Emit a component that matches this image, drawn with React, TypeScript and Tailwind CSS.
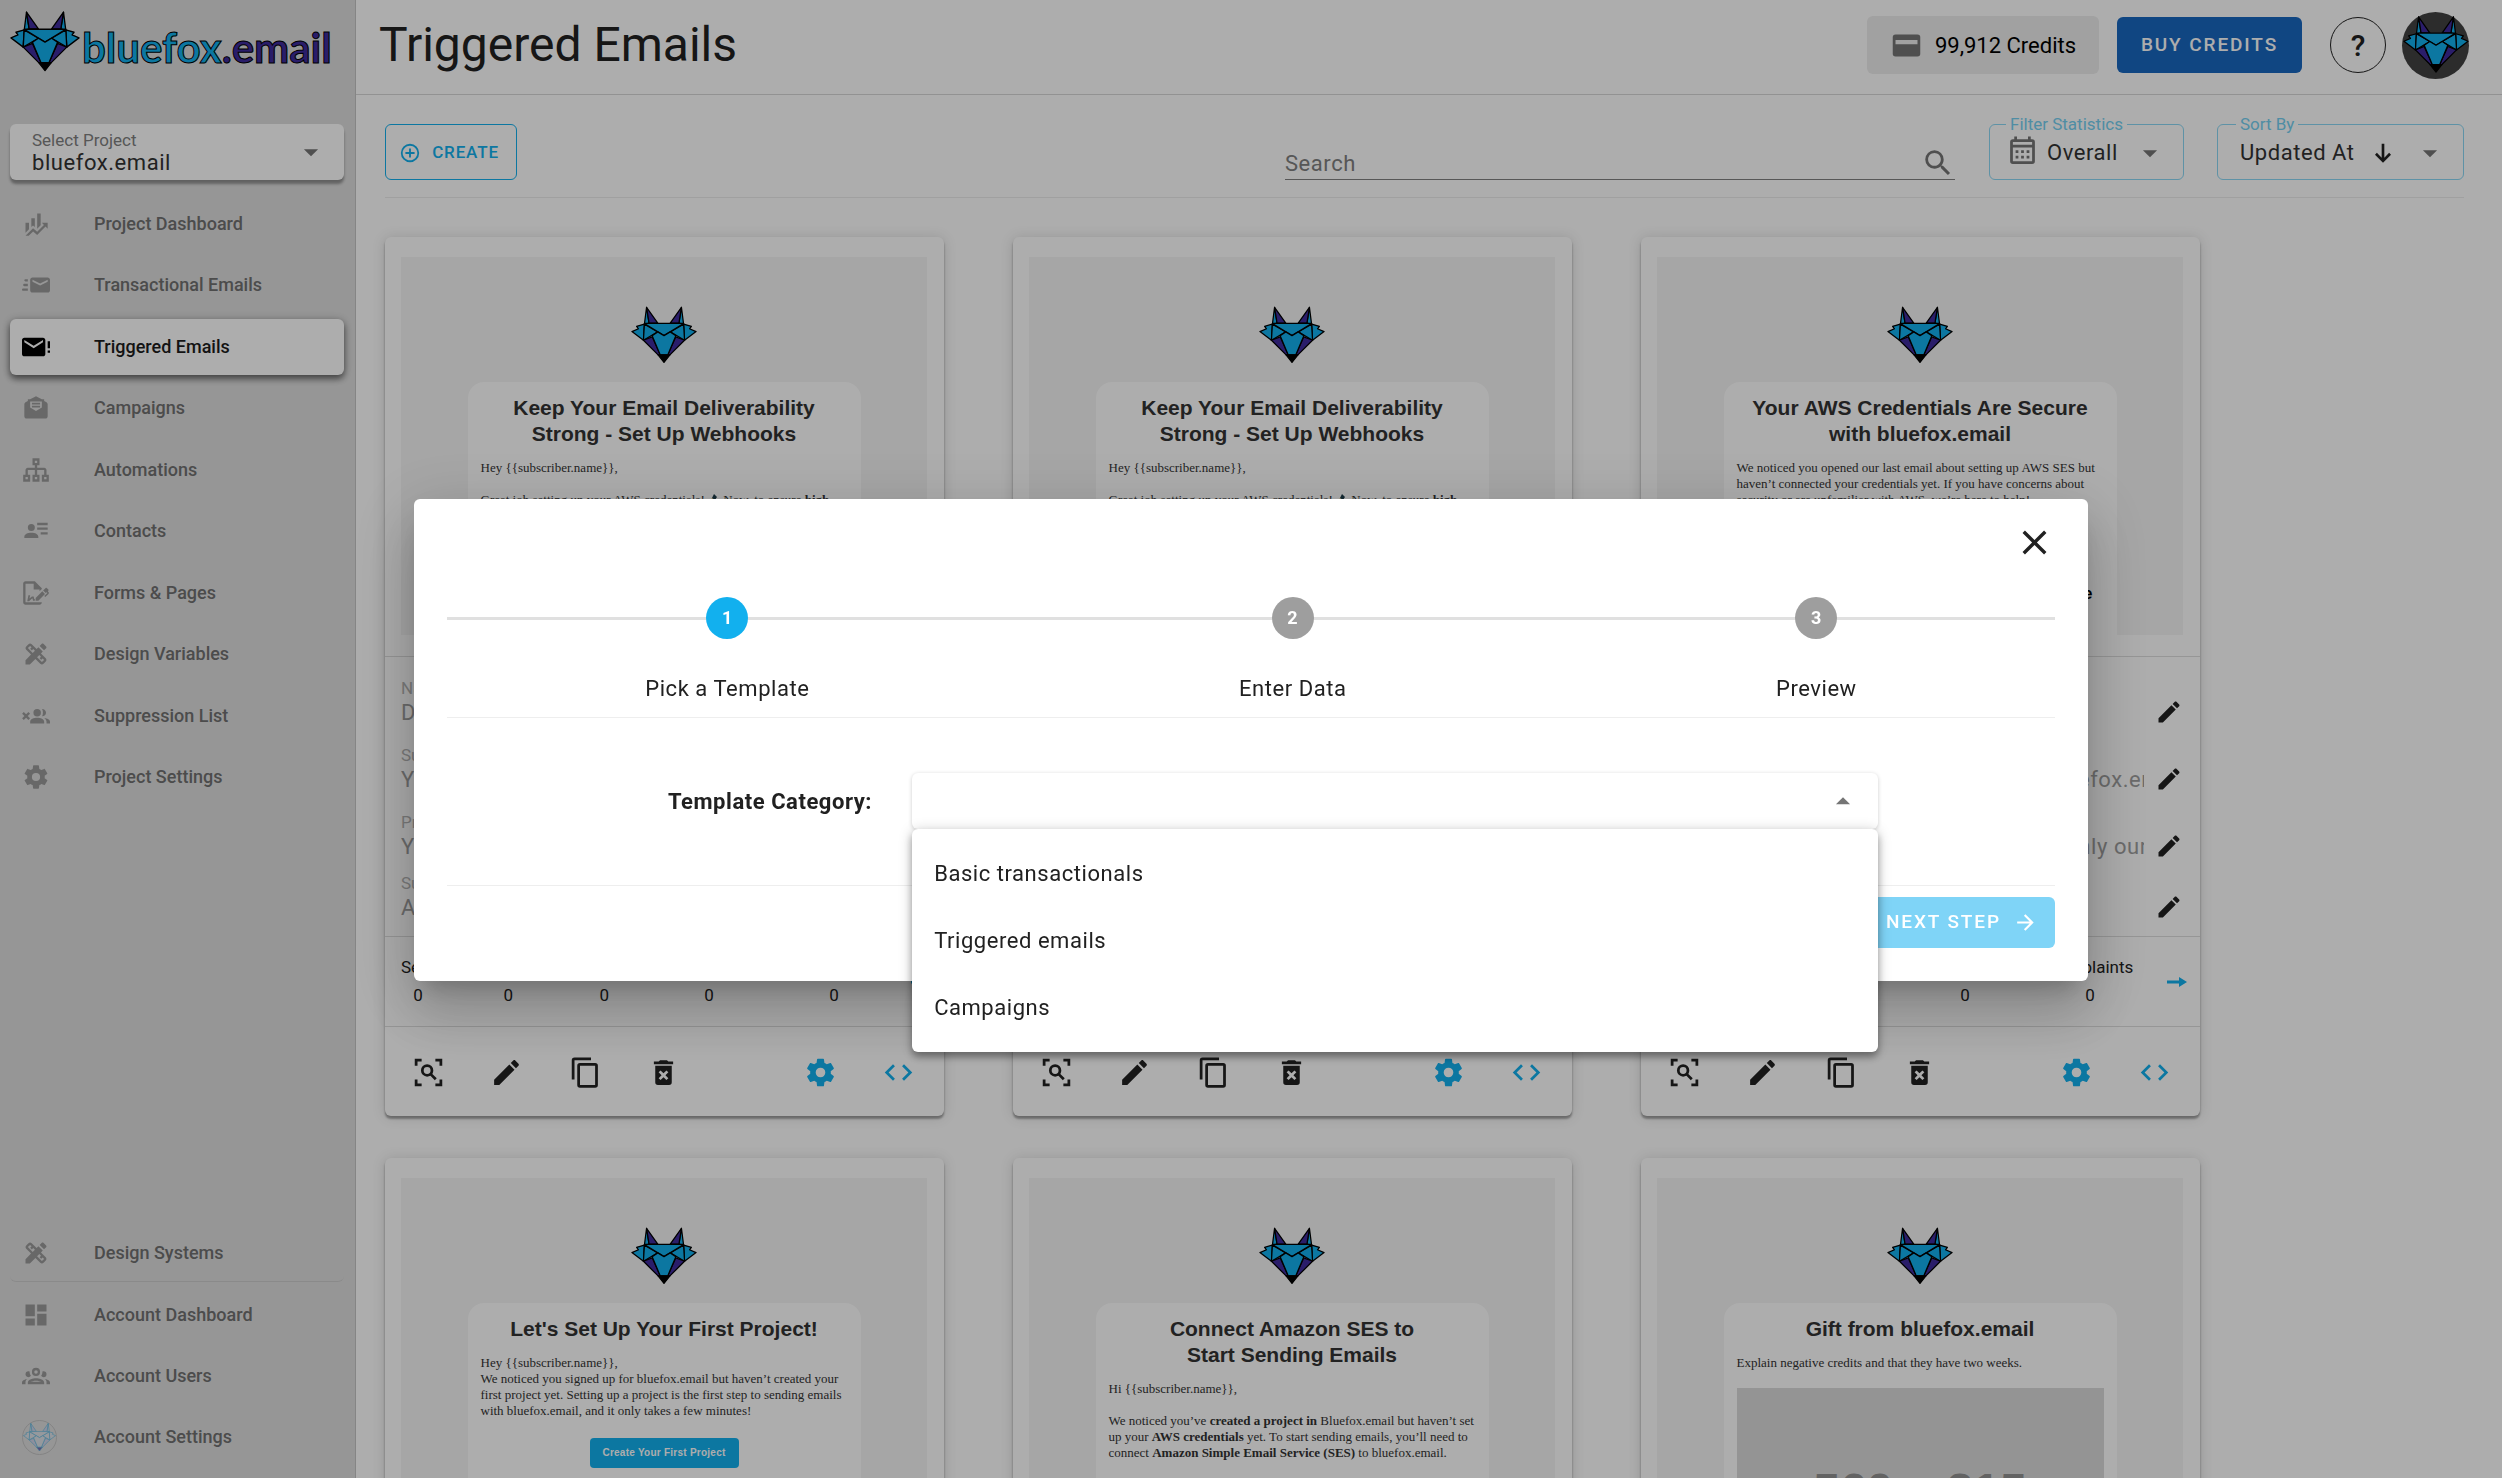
import type { ReactNode } from "react";
import { MdDashboard, MdDesignServices } from "react-icons/md";

type IconProps = { d: string; className?: string };

function Icon({ d, className = "size-7" }: IconProps) {
  return (
    <svg viewBox="0 0 24 24" fill="currentColor" aria-hidden="true" className={`shrink-0 ${className}`}>
      <path fillRule="evenodd" d={d} />
    </svg>
  );
}

const paths = {
  finance:
    "M6,16.5L3,19.44V11H6M11,14.66L9.43,13.32L8,14.64V7H11M16,13L13,16V3H16M18.81,12.81L17,11H22V16L20.21,14.21L13,21.36L9.53,18.34L5.75,22H3L9.47,15.66L13,18.64",
  emailFast:
    "M22,5.5H9C7.9,5.5 7,6.4 7,7.5V16.5C7,17.6 7.9,18.5 9,18.5H22C23.1,18.5 24,17.6 24,16.5V7.5C24,6.4 23.1,5.5 22,5.5M22,9.17L15.5,12.5L9,9.17V7.5L15.5,10.81L22,7.5V9.17M5,16.5C5,16.67 5.03,16.83 5.05,17H1C0.45,17 0,16.55 0,16S0.45,15 1,15H5V16.5M3,7H5.05C5.03,7.17 5,7.33 5,7.5V9H3C2.45,9 2,8.55 2,8S2.45,7 3,7M1,12C1,11.45 1.45,11 2,11H5V13H2C1.45,13 1,12.55 1,12Z",
  emailAlert:
    "M24,7H22V13H24V7M24,15H22V17H24V15M20,6C20,4.9 19.1,4 18,4H2C0.9,4 0,4.9 0,6V18C0,19.1 0.9,20 2,20H18C19.1,20 20,19.1 20,18V6M18,8L10,13L2,8V6L10,11L18,6V8Z",
  newsletter:
    "M12,2L7,4.5H5V6L3,7C2.4,7.5 2,8 2,8.8V19C2,20.1 2.9,21 4,21H20C21.1,21 22,20.1 22,19V8.8C22,8 21.6,7.5 21,7L19,6V4.5H17L12,2M7,6.5H17V11.5L12,14.5L7,11.5V6.5M8.5,7.5V9H15.5V7.5H8.5M8.5,10V11.5H15.5V10H8.5Z",
  sitemap:
    "M9,2H15V8H13V10H19C20.1,10 21,10.9 21,12V16H23V22H17V16H19V12H13V16H15V22H9V16H11V12H5V16H7V22H1V16H3V12C3,10.9 3.9,10 5,10H11V8H9V2M11,4V6H13V4H11M3,18V20H5V18H3M11,18V20H13V18H11M19,18V20H21V18H19Z",
  contacts:
    "M8,6A3,3 0 0,1 11,9A3,3 0 0,1 8,12A3,3 0 0,1 5,9A3,3 0 0,1 8,6M2,18V17C2,14.8 4.7,13.5 8,13.5C11.3,13.5 14,14.8 14,17V18H2M13,5H22V7H13V5M13,9H22V11H13V9M16,13H22V15H16V13Z",
  sign:
    "M19.7,12.9L14,18.6H11.7V16.3L17.4,10.6L19.7,12.9M23.1,12.1C23.1,12.4 22.8,12.7 22.5,13L20,15.5L19.1,14.6L21.7,12L21.1,11.4L20.4,12.1L18.1,9.8L20.3,7.7C20.5,7.5 20.9,7.5 21.2,7.7L22.6,9.1C22.8,9.3 22.8,9.7 22.6,10C22.4,10.2 22.2,10.4 22.2,10.6C22.2,10.8 22.4,11 22.6,11.2C22.9,11.5 23.2,11.8 23.1,12.1M3,20V4H10V9H15V10.5L17,8.5V8L11,2H3C1.9,2 1,2.9 1,4V20C1,21.1 1.9,22 3,22H15C16.1,22 17,21.1 17,20H3M11,17.1C10.8,17.1 10.6,17.2 10.5,17.2L10,15H8.5L6.4,16.7L7,14H5.5L4.5,19H6L8.9,16.4L9.5,18.7H10.5L11,18.6V17.1Z",
  removeUsers:
    "M13,6A3.2,3.2 0 1,1 13,12.4A3.2,3.2 0 1,1 13,6M7,18.5V17C7,14.8 10,13.6 13,13.6C16,13.6 19,14.8 19,17V18.5H7M17.2,6C19,6 20.6,7.3 20.6,9.2C20.6,11 19,12.4 17.2,12.3C18.2,10.5 18.2,8 17.2,6M19,13.8C21.8,14.1 24,15.3 24,17V18.5H21V17C21,15.7 20.2,14.6 19,13.8M1.5,8.6L3.5,10.6L5.5,8.6L6.9,10L4.9,12L6.9,14L5.5,15.4L3.5,13.4L1.5,15.4L0.1,14L2.1,12L0.1,10L1.5,8.6Z",
  cog:
    "M12,15.5A3.5,3.5 0 0,1 8.5,12A3.5,3.5 0 0,1 12,8.5A3.5,3.5 0 0,1 15.5,12A3.5,3.5 0 0,1 12,15.5M19.43,12.97C19.47,12.65 19.5,12.33 19.5,12C19.5,11.67 19.47,11.34 19.43,11L21.54,9.37C21.73,9.22 21.78,8.95 21.66,8.73L19.66,5.27C19.54,5.05 19.27,4.96 19.05,5.05L16.56,6.05C16.04,5.66 15.5,5.32 14.87,5.07L14.5,2.42C14.46,2.18 14.25,2 14,2H10C9.75,2 9.54,2.18 9.5,2.42L9.13,5.07C8.5,5.32 7.96,5.66 7.44,6.05L4.95,5.05C4.73,4.96 4.46,5.05 4.34,5.27L2.34,8.73C2.21,8.95 2.27,9.22 2.46,9.37L4.57,11C4.53,11.34 4.5,11.67 4.5,12C4.5,12.33 4.53,12.65 4.57,12.97L2.46,14.63C2.27,14.78 2.21,15.05 2.34,15.27L4.34,18.73C4.46,18.95 4.73,19.03 4.95,18.95L7.44,17.94C7.96,18.34 8.5,18.68 9.13,18.93L9.5,21.58C9.54,21.82 9.75,22 10,22H14C14.25,22 14.46,21.82 14.5,21.58L14.87,18.93C15.5,18.67 16.04,18.34 16.56,17.94L19.05,18.95C19.27,19.03 19.54,18.95 19.66,18.73L21.66,15.27C21.78,15.05 21.73,14.78 21.54,14.63L19.43,12.97Z",
  users:
    "M12,5A3.5,3.5 0 1,0 12,12A3.5,3.5 0 1,0 12,5M12,7A1.5,1.5 0 1,1 12,10A1.5,1.5 0 1,1 12,7M5.5,8A2.5,2.5 0 0,0 3,10.5C3,11.44 3.53,12.25 4.29,12.68C4.65,12.88 5.06,13 5.5,13C5.94,13 6.35,12.88 6.71,12.68C7.08,12.47 7.39,12.17 7.62,11.81C6.89,10.86 6.5,9.7 6.5,8.5V8.22C6.2,8.08 5.86,8 5.5,8M18.5,8C18.14,8 17.8,8.08 17.5,8.22V8.5C17.5,9.7 17.11,10.86 16.38,11.81C16.9,12.6 17.7,13 18.5,13A2.5,2.5 0 0,0 18.5,8M12,14C9.66,14 5,15.17 5,17.5V19H19V17.5C19,15.17 14.34,14 12,14M12,16C13.8,16 15.8,16.6 16.6,17H7.4C8.2,16.6 10.2,16 12,16M4.71,14.55C2.78,14.78 0,15.76 0,17.5V19H3V17.07C3,16.06 3.69,15.22 4.71,14.55M19.29,14.55C20.31,15.22 21,16.06 21,17.07V19H24V17.5C24,15.76 21.22,14.78 19.29,14.55Z",
  menuDown: "M7,10L12,15L17,10H7Z",
  menuUp: "M7,15L12,10L17,15H7Z",
  plusCircle:
    "M12,20C7.59,20 4,16.41 4,12C4,7.59 7.59,4 12,4C16.41,4 20,7.59 20,12C20,16.41 16.41,20 12,20M12,2A10,10 0 0,0 2,12A10,10 0 0,0 12,22A10,10 0 0,0 22,12A10,10 0 0,0 12,2M13,7H11V11H7V13H11V17H13V13H17V11H13V7Z",
  magnify:
    "M9.5,3A6.5,6.5 0 0,1 16,9.5C16,11.11 15.41,12.59 14.44,13.73L14.71,14H15.5L20.5,19L19,20.5L14,15.5V14.71L13.73,14.44C12.59,15.41 11.11,16 9.5,16A6.5,6.5 0 0,1 3,9.5A6.5,6.5 0 0,1 9.5,3M9.5,5C7,5 5,7 5,9.5C5,12 7,14 9.5,14C12,14 14,12 14,9.5C14,7 12,5 9.5,5Z",
  calendar:
    "M7,11H9V13H7V11M7,15H9V17H7V15M11,11H13V13H11V11M11,15H13V17H11V15M15,11H17V13H15V11M15,15H17V17H15V15M5,3H6V1H8V3H16V1H18V3H19A2,2 0 0,1 21,5V19A2,2 0 0,1 19,21H5A2,2 0 0,1 3,19V5A2,2 0 0,1 5,3M5,9V19H19V9H5M5,5V7H19V5H5Z",
  card: "M4,4H20A2,2 0 0,1 22,6V18A2,2 0 0,1 20,20H4A2,2 0 0,1 2,18V6A2,2 0 0,1 4,4M4,8V11H20V8H4Z",
  arrowDown: "M11,5H13V15.5L16.6,11.9L18,13.3L12,19.3L6,13.3L7.4,11.9L11,15.5V5Z",
  arrowRight: "M4,11V13H16L10.5,18.5L11.92,19.92L19.84,12L11.92,4.08L10.5,5.5L16,11H4Z",
  arrowRightThick: "M14,16.5V13.5H2V10.5H14V7L22,12L14,17V16.5Z",
  close:
    "M19,6.41L17.59,5L12,10.59L6.41,5L5,6.41L10.59,12L5,17.59L6.41,19L12,13.41L17.59,19L19,17.59L13.41,12L19,6.41Z",
  scan:
    "M2,2H7V4H4V7H2V2M17,2H22V7H20V4H17V2M2,17H4V20H7V22H2V17M20,17H22V22H17V20H20V17M11,6A4.5,4.5 0 0,1 15.5,10.5C15.5,11.4 15.2,12.3 14.8,13L18,16.2L16.6,17.6L13.4,14.4C12.7,14.8 11.9,15 11,15A4.5,4.5 0 1,1 11,6M11,8A2.5,2.5 0 1,0 11,13A2.5,2.5 0 1,0 11,8Z",
  pencil:
    "M20.71,7.04C21.1,6.65 21.1,6 20.71,5.63L18.37,3.29C18,2.9 17.35,2.9 16.96,3.29L15.12,5.12L18.87,8.87M3,17.25V21H6.75L17.81,9.93L14.06,6.18L3,17.25Z",
  copy: "M19,21H8V7H19M19,5H8A2,2 0 0,0 6,7V21A2,2 0 0,0 8,23H19A2,2 0 0,0 21,21V7A2,2 0 0,0 19,5M16,1H4A2,2 0 0,0 2,3V17H4V3H16V1Z",
  remove:
    "M6,19A2,2 0 0,0 8,21H16A2,2 0 0,0 18,19V7H6V19M8.46,11.88L9.87,10.47L12,12.59L14.12,10.47L15.53,11.88L13.41,14L15.53,16.12L14.12,17.53L12,15.41L9.88,17.53L8.47,16.12L10.59,14L8.46,11.88M15.5,4L14.5,3H9.5L8.5,4H5V6H19V4H15.5Z",
  code: "M14.6,16.6L19.2,12L14.6,7.4L16,6L22,12L16,18L14.6,16.6M9.4,16.6L4.8,12L9.4,7.4L8,6L2,12L8,18L9.4,16.6Z",
};

function Fox({ className, outline = false }: { className?: string; outline?: boolean }) {
  const blue = outline ? "#dfe6f0" : "#12b0ee";
  const purple = outline ? "#c9cdf0" : "#3f2b9d";
  const line = outline ? "#12a0dd" : "#000";
  return (
    <svg
      viewBox="-3 -3 212 184"
      className={className}
      stroke={line}
      strokeWidth="4"
      strokeLinejoin="round"
      role="img"
      aria-label="Bluefox"
    >
      <path fill={blue} d="M47 0L40 55L55 51Z M159 0L166 55L151 51Z" />
      <path fill={purple} d="M47 0L55 51L83 51Z M159 0L151 51L123 51Z" />
      <path fill={blue} d="M40 54L15 61L21 69L0 78L37 106L40 54Z M166 54L191 61L185 69L206 78L169 106L166 54Z" />
      <path fill={blue} d="M40 54L37 106L83 79Z M166 54L169 106L123 79Z" />
      <path fill={blue} d="M40 52H166L103 91Z" />
      <path fill={purple} d="M37 106L65 95L91 153H84Z M169 106L141 95L115 153H122Z" />
      <path fill={blue} d="M65 91L83 79L103 91L123 79L141 91L115 153H91Z" />
      <path fill={outline ? "#3f2b9d" : "#000"} d="M84 153H122L103 177Z" />
    </svg>
  );
}

function NavItem({ icon, label, active = false }: { icon: ReactNode; label: string; active?: boolean }) {
  return (
    <a
      href="#"
      aria-current={active ? "page" : undefined}
      className={
        active
          ? "flex h-14 items-center rounded-md bg-white pl-3 text-lg font-medium text-[#1c1c1c] shadow-[0_4px_6px_rgba(0,0,0,0.45),0_1px_10px_rgba(0,0,0,0.25)]"
          : "flex h-14 items-center rounded-md pl-3 text-lg font-medium text-[#707070]"
      }
    >
      <span className={`flex w-18 items-center ${active ? "text-black" : "text-[#9a9a9a]"}`}>{icon}</span>
      {label}
    </a>
  );
}

function Sidebar() {
  return (
    <aside className="flex w-[356px] shrink-0 flex-col border-r border-[#c4c4c4] bg-[#dedede] pr-[11px] pb-[13px] pl-[10px]">
      <a href="#" className="flex h-[94px] items-center">
        <Fox className="-mt-3 h-[61px] w-[70px] shrink-0" />
        <span className="ml-[2px] font-['Lato',sans-serif] text-[42px] leading-none font-bold text-[#12b0ee] [-webkit-text-stroke:1px_#000]">
          bluefox<span className="text-[#3f2b9d]">.email</span>
        </span>
      </a>

      <div className="relative mt-[30px] h-14 rounded-md bg-white shadow-[0_4px_3px_rgba(0,0,0,0.35)]">
        <label htmlFor="project" className="pointer-events-none absolute top-1 left-[22px] text-[17px] leading-6 text-[#808080]">
          Select Project
        </label>
        <select
          id="project"
          className="size-full appearance-none rounded-md bg-transparent pt-5 pl-[22px] text-[22px] tracking-wide text-[#333]"
        >
          <option>bluefox.email</option>
        </select>
        <span className="pointer-events-none absolute top-[11px] right-4 text-[#757575]">
          <Icon d={paths.menuDown} className="size-[34px]" />
        </span>
      </div>

      <nav aria-label="Project" className="mt-4 flex h-[609px] flex-col justify-between">
        <NavItem icon={<Icon d={paths.finance} />} label="Project Dashboard" />
        <NavItem icon={<Icon d={paths.emailFast} />} label="Transactional Emails" />
        <NavItem icon={<Icon d={paths.emailAlert} />} label="Triggered Emails" active />
        <NavItem icon={<Icon d={paths.newsletter} />} label="Campaigns" />
        <NavItem icon={<Icon d={paths.sitemap} />} label="Automations" />
        <NavItem icon={<Icon d={paths.contacts} />} label="Contacts" />
        <NavItem icon={<Icon d={paths.sign} />} label="Forms & Pages" />
        <NavItem icon={<MdDesignServices className="size-7" />} label="Design Variables" />
        <NavItem icon={<Icon d={paths.removeUsers} />} label="Suppression List" />
        <NavItem icon={<Icon d={paths.cog} />} label="Project Settings" />
      </nav>

      <nav aria-label="Account" className="mt-auto flex flex-col gap-[5px]">
        <div className="rounded-md border-b border-[#cccccc]">
          <NavItem icon={<MdDesignServices className="size-7" />} label="Design Systems" />
        </div>
        <NavItem icon={<MdDashboard className="size-7" />} label="Account Dashboard" />
        <NavItem icon={<Icon d={paths.users} />} label="Account Users" />
        <NavItem
          icon={
            <span className="flex size-[35px] items-center justify-center rounded-full border border-[#b0b0b0] opacity-60">
              <Fox className="w-[33px]" outline />
            </span>
          }
          label="Account Settings"
        />
      </nav>
    </aside>
  );
}

function Header() {
  return (
    <header className="flex h-[95px] items-center border-b border-[#d8d8d8] pr-[33px] pb-1 pl-[23px]">
      <h1 className="text-5xl leading-[56px] text-[#212121]">Triggered Emails</h1>
      <div className="ml-auto flex items-center">
        <div className="flex h-[58px] w-[232px] items-center justify-center gap-3 rounded-md bg-[#ededed] text-[22px] text-black">
          <span className="text-[#757575]">
            <Icon d={paths.card} className="size-[33px]" />
          </span>
          99,912 Credits
        </div>
        <button
          type="button"
          className="ml-[18px] flex h-14 w-[185px] items-center justify-center rounded-md bg-[#1867c0] text-[19px] font-medium tracking-widest text-white"
        >
          BUY CREDITS
        </button>
        <button
          type="button"
          aria-label="Help"
          className="ml-7 flex size-14 items-center justify-center rounded-full border border-[#212121] text-[30px] font-medium text-[#212121]"
        >
          ?
        </button>
        <button
          type="button"
          aria-label="Account"
          className="ml-4 flex size-[67px] items-center justify-center rounded-full bg-[#424242]"
        >
          <Fox className="w-[66px]" />
        </button>
      </div>
    </header>
  );
}

function Toolbar() {
  return (
    <div className="flex items-end border-b border-[#ececec] pb-[17px]">
      <button
        type="button"
        className="flex h-14 w-[132px] items-center justify-center gap-[11px] rounded-md border border-[#12b0ee] pt-px pr-1 text-[17px] font-medium tracking-wider text-[#12b0ee]"
      >
        <Icon d={paths.plusCircle} className="size-[22px]" />
        CREATE
      </button>

      <label className="ml-auto flex h-[33px] w-[670px] items-center border-b border-[#808080] text-[#757575]">
        <input
          type="search"
          placeholder="Search"
          aria-label="Search"
          className="h-8 min-w-0 flex-1 bg-transparent text-[22px] tracking-wide outline-none placeholder:text-[#808080]"
        />
        <Icon d={paths.magnify} className="size-[34px]" />
      </label>

      <div className="relative ml-[34px] h-14 w-[195px] rounded-md border border-[#8bd8f5] text-[#757575]">
        <label htmlFor="statistics" className="absolute -top-[13px] left-4 bg-white px-1 text-[17px] leading-6 text-[#75d0f2]">
          Filter Statistics
        </label>
        <span className="pointer-events-none absolute top-[10px] left-4">
          <Icon d={paths.calendar} className="size-[33px]" />
        </span>
        <select
          id="statistics"
          className="size-full appearance-none bg-transparent pl-[57px] text-[22px] tracking-wide text-[#333]"
        >
          <option>Overall</option>
        </select>
        <span className="pointer-events-none absolute top-[11px] right-4">
          <Icon d={paths.menuDown} className="size-[34px]" />
        </span>
      </div>

      <div className="relative ml-[33px] h-14 w-[247px] rounded-md border border-[#8bd8f5] text-[#757575]">
        <label htmlFor="sort" className="absolute -top-[13px] left-[18px] bg-white px-1 text-[17px] leading-6 text-[#75d0f2]">
          Sort By
        </label>
        <select
          id="sort"
          className="size-full appearance-none bg-transparent pl-[22px] text-[22px] tracking-wide text-[#333]"
        >
          <option>Updated At</option>
        </select>
        <span className="pointer-events-none absolute top-3 right-16 text-[#212121]">
          <Icon d={paths.arrowDown} className="size-8" />
        </span>
        <span className="pointer-events-none absolute top-[11px] right-4">
          <Icon d={paths.menuDown} className="size-[34px]" />
        </span>
      </div>
    </div>
  );
}

type Template = {
  title: string[];
  body: ReactNode;
  fields: { label: string; value: string }[];
};

const setupFields = [
  { label: "Name", value: "Deliverability" },
  { label: "Subject", value: "Your email deliverability" },
  { label: "Preview Text", value: "Your webhooks are waiting" },
  { label: "Subscriber List", value: "AWS credentials" },
];

function WebhooksBody() {
  return (
    <>
      Hey {"{{subscriber.name}}"},<br />
      <br />
      Great job setting up your AWS credentials!{" "}
      <svg viewBox="0 0 12 12" className="inline size-3 align-[-2px]" aria-hidden="true">
        <path d="M1 11L4 4L8 8Z" fill="#e8b821" />
        <path d="M6 0L9 3L7 6L4 4Z" fill="#1d3c4a" />
        <path d="M9 5L12 6L10 9Z" fill="#2b6f45" />
      </svg>{" "}
      Now, to ensure <b>high</b>
    </>
  );
}

const templates: Template[] = [
  { title: ["Keep Your Email Deliverability", "Strong - Set Up Webhooks"], fields: setupFields, body: <WebhooksBody /> },
  { title: ["Keep Your Email Deliverability", "Strong - Set Up Webhooks"], fields: setupFields, body: <WebhooksBody /> },
  {
    title: ["Your AWS Credentials Are Secure", "with bluefox.email"],
    fields: [
      { label: "Name", value: "AWS credentials" },
      { label: "Subject", value: "Your AWS credentials are secure with bluefox.email" },
      { label: "Preview Text", value: "You stay always in full control of it, and only our" },
      { label: "Subscriber List", value: "All users" },
    ],
    body: (
      <>
        We noticed you opened our last email about setting up AWS SES but haven’t connected your credentials yet. If you
        have concerns about security or are unfamiliar with AWS, we’re here to help!
        <b className="mt-[78px] mr-[11px] block text-right font-['Liberation_Sans',Arial,sans-serif] text-[17px] text-black">
          Why Your Credentials Are Safe
        </b>
      </>
    ),
  },
  {
    title: ["Let's Set Up Your First Project!"],
    fields: setupFields,
    body: (
      <>
        Hey {"{{subscriber.name}}"},<br />
        We noticed you signed up for bluefox.email but haven’t created your first project yet. Setting up a project is
        the first step to sending emails with bluefox.email, and it only takes a few minutes!
        <span className="mt-[19px] flex justify-center">
          <button
            type="button"
            className="h-[30px] w-[149px] rounded-sm bg-[#12b0ee] font-['Liberation_Sans',Arial,sans-serif] text-[10px] font-bold tracking-wide text-white"
          >
            Create Your First Project
          </button>
        </span>
      </>
    ),
  },
  {
    title: ["Connect Amazon SES to", "Start Sending Emails"],
    fields: setupFields,
    body: (
      <>
        Hi {"{{subscriber.name}}"},<br />
        <br />
        We noticed you’ve <b>created a project in</b> Bluefox.email but haven’t set up your <b>AWS credentials</b> yet.
        To start sending emails, you’ll need to connect <b>Amazon Simple Email Service (SES)</b> to bluefox.email.
      </>
    ),
  },
  {
    title: ["Gift from bluefox.email"],
    fields: setupFields,
    body: (
      <>
        Explain negative credits and that they have two weeks.
        <span className="mt-[17px] flex h-[206px] items-center justify-center bg-[#dbdbdb] font-['Liberation_Sans',Arial,sans-serif] text-5xl font-bold text-[#929292]">
          560 x 315
        </span>
      </>
    ),
  },
];

const stats = ["Sent", "Opens", "Clicks", "Bounces", "Complaints"];

function TemplateCard({ template }: { template: Template }) {
  return (
    <article className="flex flex-col rounded-md bg-white shadow-[0_3px_2px_rgba(0,0,0,0.25),0_2px_3px_rgba(0,0,0,0.14),0_1px_14px_rgba(0,0,0,0.14)]">
      <div className="border-b border-[#ddd] pt-5 pr-[17px] pb-[21px] pl-4">
        <div className="flex h-[378px] flex-col items-center overflow-hidden bg-[#f5f5f5] pt-[49px]">
          <Fox className="h-[58px] w-[66px] shrink-0" />
          <div className="mt-[18px] w-[393px] flex-1 rounded-t-2xl bg-white px-[13px] pt-[13px]">
            <h2 className="text-center font-['Liberation_Sans',Arial,sans-serif] text-[21px] leading-[26px] font-bold text-[#333]">
              {template.title.map((line) => (
                <span key={line} className="block">
                  {line}
                </span>
              ))}
            </h2>
            <div className="mt-[13px] font-['Liberation_Serif','Times_New_Roman',serif] text-[13px] leading-4 text-[#333]">
              {template.body}
            </div>
          </div>
        </div>
      </div>

      <div className="h-[280px] border-b border-[#ddd] pt-[19px] pr-[17px] pl-4">
        {template.fields.map((field) => (
          <div key={field.label} className="mb-[17px] flex items-end nth-3:mb-[11px]">
            <div className="min-w-0 flex-1">
              <div className="text-[17px] leading-6 text-[#b5b5b5]">{field.label}</div>
              <div className="mr-[11px] overflow-hidden text-[22px] leading-[26px] tracking-wide whitespace-nowrap text-[#9e9e9e]">
                {field.value}
              </div>
            </div>
            <button type="button" aria-label={`Edit ${field.label}`} className="text-[#212121]">
              <Icon d={paths.pencil} className="size-7" />
            </button>
          </div>
        ))}
      </div>

      <div className="flex h-[90px] items-center justify-between border-b border-[#ddd] pr-[11px] pl-4 text-[#212121]">
        <dl className="-mt-0.5 flex gap-[49px] text-center text-[17px] leading-7">
          {stats.map((stat) => (
            <div key={stat}>
              <dt>{stat}</dt>
              <dd>0</dd>
            </div>
          ))}
        </dl>
        <button type="button" aria-label="Details" className="text-[#12b0ee]">
          <Icon d={paths.arrowRightThick} className="size-6" />
        </button>
      </div>

      <div className="grid h-[89px] grid-cols-7 place-items-center pt-[2px] pr-[6px] pl-1 text-[#212121]">
        <button type="button" aria-label="Preview">
          <Icon d={paths.scan} className="size-[33px]" />
        </button>
        <button type="button" aria-label="Edit">
          <Icon d={paths.pencil} className="size-[33px]" />
        </button>
        <button type="button" aria-label="Duplicate">
          <Icon d={paths.copy} className="size-[33px]" />
        </button>
        <button type="button" aria-label="Delete">
          <Icon d={paths.remove} className="size-[33px]" />
        </button>
        <button type="button" aria-label="Settings" className="col-start-6 text-[#12b0ee]">
          <Icon d={paths.cog} className="size-[33px]" />
        </button>
        <button type="button" aria-label="Code" className="text-[#12b0ee]">
          <Icon d={paths.code} className="size-[33px]" />
        </button>
      </div>
    </article>
  );
}

function TemplateDialog() {
  const steps = ["Pick a Template", "Enter Data", "Preview"];
  return (
    <div className="fixed inset-0 flex items-center justify-center bg-black/32 px-8 pt-0.5">
      <section
        role="dialog"
        aria-modal="true"
        aria-label="Create email"
        className="w-full max-w-[1674px] rounded-md bg-white px-[33px] pt-[23px] pb-[33px] text-[22px] tracking-wide text-[#212121] shadow-[0_15px_21px_-10px_rgba(0,0,0,0.2),0_34px_53px_4px_rgba(0,0,0,0.14),0_13px_64px_11px_rgba(0,0,0,0.12)]"
      >
        <div className="flex justify-end">
          <button type="button" aria-label="Close">
            <Icon d={paths.close} className="size-[41px]" />
          </button>
        </div>

        <div className="relative mt-[34px] border-b border-[#eee] pb-[12px]">
          <div className="absolute inset-x-0 top-5 h-[3px] bg-[#e0e0e0]" />
          <ol className="relative flex justify-around gap-[33px]">
            {steps.map((step, i) => (
              <li key={step} className="flex flex-col items-center gap-[34px]">
                <span
                  className={`flex size-[42px] items-center justify-center rounded-full text-lg font-bold text-white ${
                    i === 0 ? "bg-[#12b0ee]" : "bg-[#9e9e9e]"
                  }`}
                >
                  {i + 1}
                </span>
                <span className="leading-8">{step}</span>
              </li>
            ))}
          </ol>
        </div>

        <div className="flex items-center justify-center border-b border-[#eee] pt-[55px] pb-14 pl-[44px]">
          <label htmlFor="category" className="font-bold">
            Template Category:
          </label>
          <div className="relative ml-10 h-14 w-[966px] rounded-md bg-white shadow-[0_1px_4px_rgba(0,0,0,0.2)]">
            <select id="category" className="size-full appearance-none rounded-md bg-transparent px-6">
              <option value="" />
            </select>
            <span className="pointer-events-none absolute top-[10px] right-[18px] text-[#757575]">
              <Icon d={paths.menuUp} className="size-[34px]" />
            </span>
            <ul
              role="listbox"
              aria-label="Template categories"
              className="absolute inset-x-0 top-full z-10 rounded-md bg-white py-[11px] shadow-[0_5px_7px_rgba(0,0,0,0.3),0_2px_14px_rgba(0,0,0,0.22)]"
            >
              {["Basic transactionals", "Triggered emails", "Campaigns"].map((option) => (
                <li key={option} role="option" aria-selected="false" className="flex h-[67px] items-center px-[22px]">
                  {option}
                </li>
              ))}
            </ul>
          </div>
        </div>

        <div className="flex justify-end pt-[11px]">
          <button
            type="button"
            className="flex h-[51px] items-center gap-3 rounded-md bg-[#7fd4f7] pr-[17px] pl-6 text-[19px] font-medium tracking-widest text-white"
          >
            NEXT STEP
            <Icon d={paths.arrowRight} className="size-[25px]" />
          </button>
        </div>
      </section>
    </div>
  );
}

export default function App() {
  return (
    <div className="flex h-screen overflow-hidden bg-white font-['Roboto',sans-serif]">
      <Sidebar />
      <main className="min-w-0 flex-1 overflow-hidden">
        <Header />
        <div className="pt-[29px] pr-[38px] pl-[29px]">
          <Toolbar />
          <div className="mt-[39px] grid grid-cols-[repeat(auto-fill,559px)] gap-x-[69px] gap-y-[42px]">
            {templates.map((template, i) => (
              <TemplateCard key={i} template={template} />
            ))}
          </div>
        </div>
      </main>
      <TemplateDialog />
    </div>
  );
}
